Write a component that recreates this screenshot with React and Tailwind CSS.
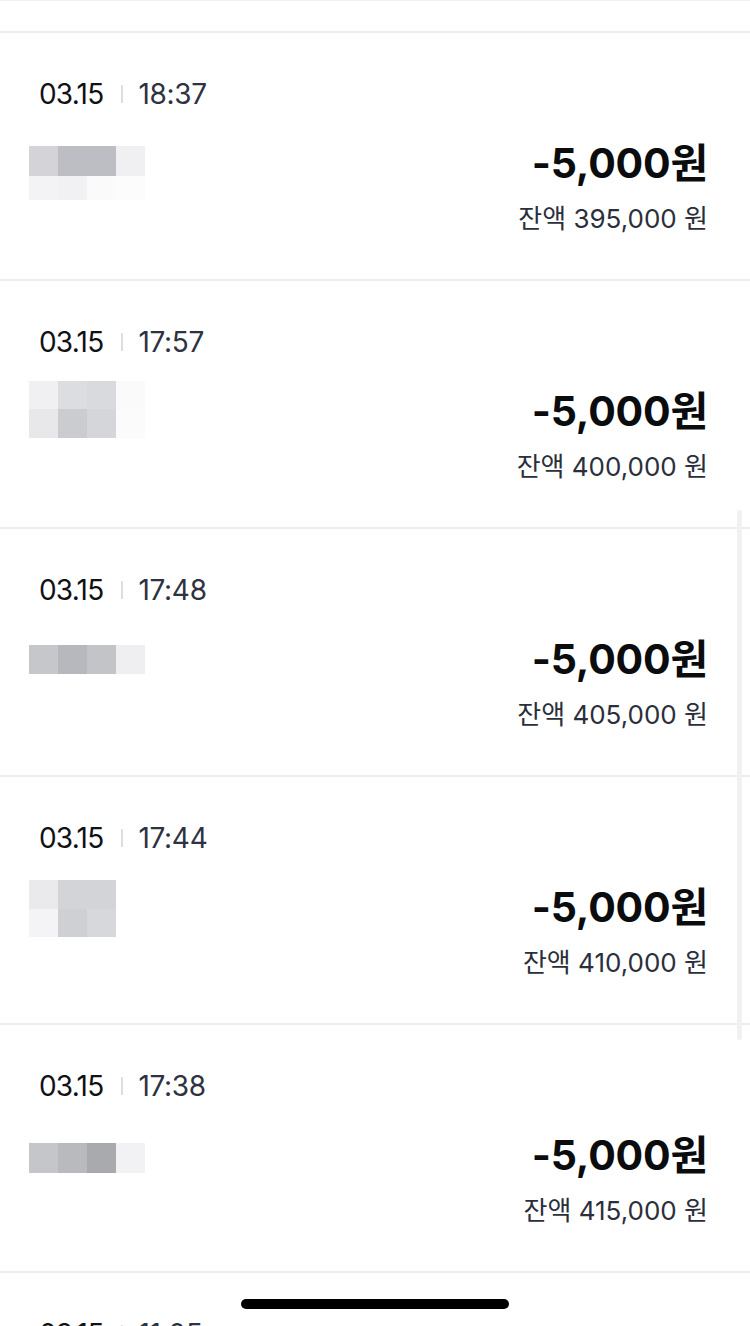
import React from 'react';

const rows = [
  {
    time: '18:37',
    balance: '395,000',
    mosaicTop: 'mt-[6px]',
    cells: [
      ['bg-[#d3d3d8]', 'bg-[#bdbec3]', 'bg-[#bdbec3]', 'bg-[#f0f0f2]'],
      ['bg-[#f3f3f5]', 'bg-[#f1f1f3]', 'bg-[#fafafa]', 'bg-[#fcfcfc]'],
    ],
    heights: ['h-[30px]', 'h-[24px]'],
  },
  {
    time: '17:57',
    balance: '400,000',
    mosaicTop: '-mt-[7px]',
    cells: [
      ['bg-[#f0f0f2]', 'bg-[#dcdde0]', 'bg-[#d8dadd]', 'bg-[#fafafa]'],
      ['bg-[#e8e8ea]', 'bg-[#cbccd0]', 'bg-[#d5d6d9]', 'bg-[#fbfbfb]'],
    ],
    heights: ['h-[28px]', 'h-[29px]'],
  },
  {
    time: '17:48',
    balance: '405,000',
    mosaicTop: 'mt-[9px]',
    cells: [['bg-[#c6c7cb]', 'bg-[#b7b8bd]', 'bg-[#c3c4c8]', 'bg-[#efeff1]']],
    heights: ['h-[29px]'],
  },
  {
    time: '17:44',
    balance: '410,000',
    mosaicTop: '-mt-[4px]',
    cells: [
      ['bg-[#eaeaec]', 'bg-[#d3d4d7]', 'bg-[#d3d4d7]', 'bg-white'],
      ['bg-[#f4f4f6]', 'bg-[#cfd0d3]', 'bg-[#d7d8db]', 'bg-white'],
    ],
    heights: ['h-[29px]', 'h-[28px]'],
  },
  {
    time: '17:38',
    balance: '415,000',
    mosaicTop: 'mt-[11px]',
    cells: [['bg-[#c5c6ca]', 'bg-[#b9babe]', 'bg-[#a9aaae]', 'bg-[#f2f2f4]']],
    heights: ['h-[30px]'],
  },
];

const font = { fontFamily: 'Inter, "Noto Sans CJK KR", sans-serif' };

const Mosaic = ({ cells, heights, mosaicTop }) => (
  <div className={`flex flex-col ${mosaicTop}`}>
    {cells.map((line, i) => (
      <div key={i} className={`flex ${heights[i]}`}>
        {line.map((c, j) => (
          <div key={j} className={`w-[29px] ${c}`} />
        ))}
      </div>
    ))}
  </div>
);

const Row = ({ row, last }) => (
  <div className={`h-[248px] shrink-0 ${last ? '' : 'border-b-2 border-[#ececf0]'}`}>
    <div className="pt-[45px] pl-[39px] flex items-center h-[32px] box-content">
      <span className="text-[28px] leading-[32px] text-[#111214] tracking-[-0.8px]">03.15</span>
      <span className="w-[2px] h-[18px] bg-[#dedee2] ml-[18px] mr-[15px]" />
      <span className="text-[28px] leading-[32px] text-[#2e3242] tracking-[-0.3px]">
        {row ? row.time : '11:05'}
      </span>
    </div>
    {row && (
      <div className="flex justify-between items-start pl-[29px] pr-[42px] mt-[30px]">
        <Mosaic {...row} />
        <div className="flex flex-col items-end">
          <div className="text-[41px] leading-[46px] font-bold text-[#0b0c0e] tracking-[-0.2px]">
            -5,000원
          </div>
          <div className="mt-[17px] text-[26px] leading-[32px] text-[#2b2f3b]">
            잔액 {row.balance} 원
          </div>
        </div>
      </div>
    )}
  </div>
);

export default function App() {
  return (
    <div className="relative w-[750px] h-[1326px] overflow-hidden bg-white" style={font}>
      <div className="flex flex-col">
        <div className="h-[33px] shrink-0 border-t border-[#f1f1f4] border-b-2 border-b-[#ececf0]" />
        {rows.map((r, i) => (
          <Row key={i} row={r} />
        ))}
        <Row last />
      </div>

      {/* scroll indicator */}
      <div className="absolute left-[737px] top-[510px] w-[5px] h-[530px] rounded-full bg-[#f1f1f3]" />

      {/* home indicator */}
      <div className="absolute left-[241px] top-[1299px] w-[268px] h-[10px] rounded-full bg-black" />
    </div>
  );
}
